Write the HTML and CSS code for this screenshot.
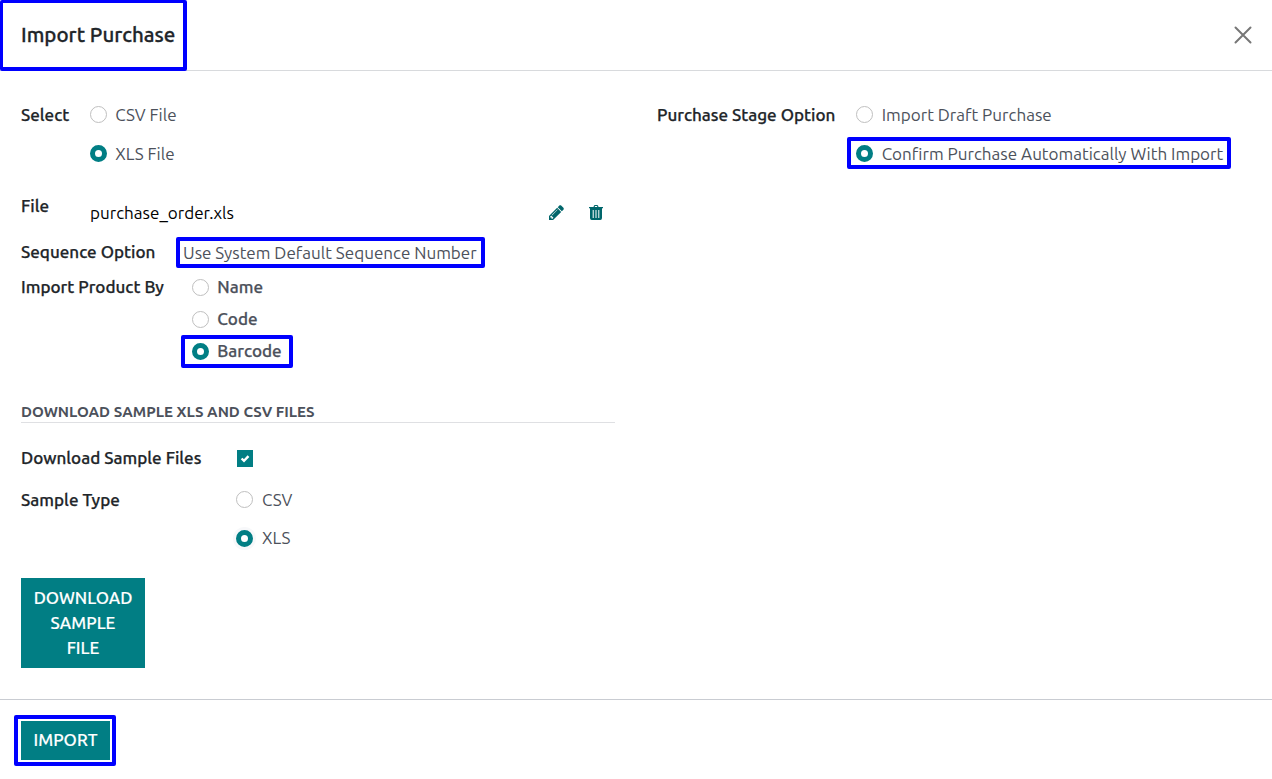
FILE: index.html
```
<!DOCTYPE html>
<html lang="en">
<head>
<meta charset="utf-8">
<title>Import Purchase</title>
<link rel="stylesheet" href="styles.css">
</head>
<body>
<div class="dialog">
  <header class="dialog-header">
    <h1 class="title">Import Purchase</h1>
    <svg class="close" viewBox="0 0 18 18"><path d="M1.500 1.500 16.500 16.500M16.500 1.500 1.500 16.500"/></svg>
    <span class="mark mark-title"></span>
  </header>
  <main class="dialog-body">
    <section class="col">
      <div class="row">
        <div class="label w-select">Select</div>
        <div class="options gap-wide">
          <div class="option"><i class="radio"></i><span>CSV File</span></div>
          <div class="option"><i class="radio on"></i><span>XLS File</span></div>
        </div>
      </div>
      <div class="row row-file">
        <div class="label w-select">File</div>
        <div class="file"><span class="filename">purchase_order.xls</span>
          <svg class="icon pencil" viewBox="0 0 1536 1536"><path d="M363 1408l91-91-235-235-91 91v107h128v128h107zM886 480c0-13-9-22-22-22-6 0-12 2-17 7l-542 542c-5 5-7 11-7 17 0 13 9 22 22 22 6 0 12-2 17-7l542-542c5-5 7-11 7-17zM832 288l416 416-832 832H0v-416zM1515 384c0 34-14 67-37 90l-166 166-416-416 166-165c23-24 56-38 90-38s67 14 91 38l235 234c23 24 37 57 37 91z"/></svg>
          <svg class="icon trash" viewBox="0 0 14 15"><path fill-rule="evenodd" d="M4.5 2 5 .6Q5.2 0 6 0h2q.8 0 1 .6L9.5 2H14v1.3h-1V13q0 2-1.7 2H2.7Q1 15 1 13V3.300H0V2zM5.700 2h2.600L8 1H6zM3.700 5v8h1V5zM6.500 5v8h1V5zM9.300 5v8h1V5z"/></svg>
        </div>
      </div>
      <div class="row">
        <div class="label w-seq">Sequence Option</div>
        <div class="value"><span>Use System Default Sequence Number</span><span class="mark mark-seq"></span></div>
      </div>
      <div class="row row-product">
        <div class="label w-product">Import Product By</div>
        <div class="options gap-tight medium">
          <div class="option"><i class="radio"></i><span>Name</span></div>
          <div class="option"><i class="radio"></i><span>Code</span></div>
          <div class="option"><i class="radio on"></i><span>Barcode</span><span class="mark mark-barcode"></span></div>
        </div>
      </div>
      <h2 class="section">DOWNLOAD SAMPLE XLS AND CSV FILES</h2>
      <div class="row row-download">
        <div class="label w-sample">Download Sample Files</div>
        <svg class="check" viewBox="0 0 16 17"><path d="M4.600 8.500 7 10.900 11.500 6.200"/></svg>
      </div>
      <div class="row row-type">
        <div class="label w-sample">Sample Type</div>
        <div class="options gap-type">
          <div class="option"><i class="radio"></i><span>CSV</span></div>
          <div class="option"><i class="radio on focus"></i><span>XLS</span></div>
        </div>
      </div>
      <button class="btn btn-sample">DOWNLOAD<br>SAMPLE<br>FILE</button>
    </section>
    <section class="col">
      <div class="row">
        <div class="label w-stage">Purchase Stage Option</div>
        <div class="options gap-wide">
          <div class="option"><i class="radio"></i><span>Import Draft Purchase</span></div>
          <div class="option"><i class="radio on"></i><span>Confirm Purchase Automatically With Import</span><span class="mark mark-confirm"></span></div>
        </div>
      </div>
    </section>
  </main>
  <footer class="dialog-footer">
    <button class="btn btn-import">IMPORT</button>
    <span class="mark mark-import"></span>
  </footer>
</div>
</body>
</html>
```
FILE: styles.css
```
* { box-sizing: border-box; }
body { margin: 0; background: #fff; color: #4c515b; font: 400 17.06px/24px Ubuntu, "Noto Sans", sans-serif; }
.dialog { height: 779px; display: flex; flex-direction: column; overflow: hidden; }
.dialog-header { position: relative; height: 71px; flex: none; display: flex; align-items: center; justify-content: space-between; padding: 0 21px 1px; border-bottom: 1px solid #d8dadd; }
.title { margin: 0; font-size: 20.5px; line-height: 30px; font-weight: 500; color: #212529; -webkit-text-stroke: 0.3px; }
.close { width: 18px; height: 18px; margin: 0 -0.5px 0 0; fill: none; stroke: #777; stroke-width: 2; stroke-linecap: round; }
.dialog-body { flex: 1; display: grid; grid-template-columns: 594px 594px; column-gap: 42px; padding: 32px 21px 0; }
.row { display: flex; align-items: flex-start; }
.label { flex: none; white-space: nowrap; font-weight: 500; color: #212529; -webkit-text-stroke: 0.25px; }
.w-select { width: 69px; }
.w-seq { width: 162px; }
.w-product { width: 171px; }
.w-sample { width: 215px; }
.w-stage { width: 199.4px; }
.options { display: flex; flex-direction: column; }
.gap-wide { gap: 15px; }
.gap-tight { gap: 8px; }
.gap-type { gap: 14px; }
.medium { font-weight: 500; -webkit-text-stroke: 0.25px; }
.option { position: relative; display: flex; align-items: center; gap: 8.3px; height: 24px; white-space: nowrap; }
.gap-type .option { gap: 9px; }
.radio { flex: none; width: 17px; height: 17px; border: 1px solid #bfbfbf; border-radius: 50%; background: #fff; }
.gap-wide .radio, .gap-type .radio:not(.on) { margin-top: -1px; }
.radio.on { border: 5px solid #017e84; }
.radio.focus { box-shadow: 0 0 0 3px #f7f8fa; }
.row-file { height: 46px; margin-top: 28px; }
.file { display: flex; align-items: center; width: 525px; height: 24px; margin-top: 7px; color: #000; }
.filename { flex: 1; }
.icon { flex: none; margin-top: -1px; fill: #01666b; }
.pencil { width: 15px; height: 15px; margin-right: 25px; }
.trash { width: 14px; height: 15px; margin-right: 12px; }
.value { position: relative; margin-top: 1px; white-space: nowrap; }
.row-product { margin-top: 10px; }
.section { height: 21px; margin: 39px 0 0; border-bottom: 1px solid #dfe0e3; font-size: 15.05px; line-height: 20px; font-weight: 700; white-space: nowrap; }
.row-download { margin-top: 23px; }
.check { width: 16px; height: 17px; margin: 4px 0 0 1px; background: #017e84; fill: none; stroke: #fff; stroke-width: 2.4; }
.row-type { margin-top: 18px; }
.btn { display: block; border: 0; background: #017e84; color: #fff; font: 500 17px/25px Ubuntu, "Noto Sans", sans-serif; -webkit-text-stroke: 0.15px; }
.btn-sample { width: 124px; height: 90px; margin-top: 28px; padding: 0 12px 1px; }
.dialog-footer { position: relative; flex: none; height: 80px; padding: 21px; border-top: 1px solid #c9ccd2; }
.btn-import { width: 89px; height: 39px; padding: 0 0 2px; }
.mark { position: absolute; border: 4px solid #00f; border-radius: 2px; pointer-events: none; }
.mark-title { left: 0; top: 0; width: 187px; height: 71px; border-width: 3px 4px 4px 3px; }
.mark-seq { left: -7px; top: -4px; width: 309px; height: 31px; }
.mark-barcode { left: -11px; top: -4px; width: 112px; height: 33px; }
.mark-confirm { left: -9.4px; top: -5px; width: 384px; height: 32px; }
.mark-import { left: 14px; top: 15px; width: 102px; height: 51px; }
```
